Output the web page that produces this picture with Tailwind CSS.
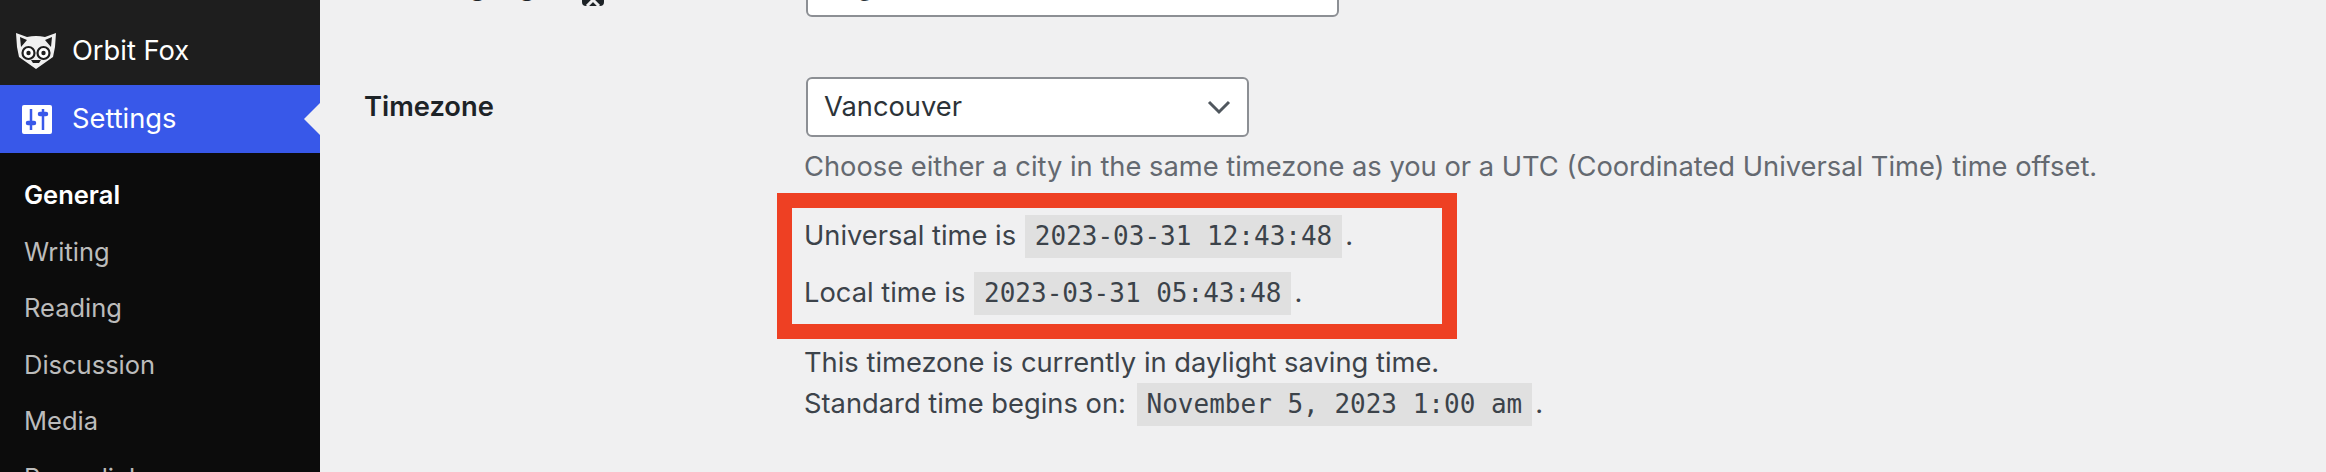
<!DOCTYPE html>
<html lang="en">
<head>
  <meta charset="UTF-8" />
  <title>General Settings</title>
  <script src="https://cdn.jsdelivr.net/npm/@tailwindcss/browser@4"></script>
</head>
<body class="bg-[#f0f0f1] h-screen overflow-hidden flex font-['Inter',sans-serif]">
  <!-- Admin sidebar -->
  <aside class="w-[320px] h-full shrink-0 bg-[#0c0c0c] flex flex-col overflow-hidden">
    <div class="h-[85px] shrink-0 bg-[#1e1e1e] flex items-start pl-4 pt-[33px] gap-[16px] text-white text-[27.3px]">
      <svg class="w-10 h-9" viewBox="0 0 40 36">
        <path d="M0 0L11 4Q20 2 29 4L40 0L39 14L37 24L20 36L3 24L1 14Z" fill="#f0f0f0"/>
        <path d="M4 4L11 7L5 14ZM36 4L29 7L35 14Z" fill="#1e1e1e"/>
        <g fill="#fff" stroke="#1e1e1e" stroke-width="2.2">
          <circle cx="12.5" cy="20" r="6"/>
          <circle cx="27.5" cy="20" r="6"/>
        </g>
        <circle cx="12.5" cy="20" r="2.2" fill="#1e1e1e"/>
        <circle cx="27.5" cy="20" r="2.2" fill="#1e1e1e"/>
        <path d="M15 27h10l-2 3h-6z" fill="#1e1e1e"/>
      </svg>
      <span class="leading-[36px]">Orbit Fox</span>
    </div>
    <div class="h-[68px] shrink-0 bg-[#3858e9] flex items-center pl-[22px] gap-[20px] text-white text-[27.3px] relative">
      <svg class="w-[30px] h-[29px]" viewBox="0 0 30 29">
        <rect width="30" height="29" rx="2" fill="#fff"/>
        <path d="M9 4v21M21 4v21" stroke="#3858e9" stroke-width="2.5"/>
        <path d="M6 18h6M18 9h6" stroke="#3858e9" stroke-width="4.5" stroke-linecap="round"/>
      </svg>
      <span>Settings</span>
      <div class="absolute right-0 top-[18px] w-0 h-0 border-y-[16px] border-y-transparent border-r-[16px] border-r-[#f0f0f1]"></div>
    </div>
    <nav class="pl-[24px] pt-[14px] flex flex-col text-[25.5px] leading-[56.5px] text-[#bcbcbc]">
      <a class="text-white font-semibold">General</a>
      <a>Writing</a>
      <a>Reading</a>
      <a>Discussion</a>
      <a>Media</a>
      <a>Permalinks</a>
    </nav>
  </aside>
  <!-- Settings form -->
  <main class="flex-1 flex flex-col pl-[44px] text-[27.3px] text-[#3c434a] overflow-hidden">
    <div class="h-0 flex">
      <div class="w-[442px] flex items-start gap-[30px] h-[30px] -mt-[29px] font-semibold text-[#1d2327] leading-[30px]">
        <span>Site Language</span>
        <svg class="w-[22px] h-[22px] mt-[13px]" viewBox="0 0 22 22">
          <rect width="22" height="22" rx="4" fill="#1d2327"/>
          <path d="M5 22l6-6 6 6" fill="none" stroke="#f0f0f1" stroke-width="3"/>
        </svg>
      </div>
      <div class="w-[533px] h-[50px] -mt-[33px] pl-[16px] bg-white border-2 border-[#8c8f94] rounded-md text-[#2c3338] leading-[34px]">English (United States)</div>
    </div>
    <div class="flex pt-[77px]">
      <div class="w-[440px] font-semibold text-[#1d2327] leading-[60px]">Timezone</div>
      <div class="flex flex-col">
        <div class="w-[443px] h-[60px] ml-[2px] bg-white border-2 border-[#8c8f94] rounded-md flex items-center justify-between pl-[16px] pr-[16px] text-[#2c3338]">
          <span>Vancouver</span>
          <svg class="w-6 h-6" viewBox="0 0 24 24" fill="none" stroke="#50575e" stroke-width="3"><path d="M2 7l10 10L22 7"/></svg>
        </div>
        <p class="mt-[12px] text-[#646970] whitespace-nowrap leading-[36px]">Choose either a city in the same timezone as you or a UTC (Coordinated Universal Time) time offset.</p>
        <div class="w-[680px] h-[146px] -ml-[27px] mt-[8px] border-[15px] border-[#ee4023] pl-[12px] pt-[6px] flex flex-col gap-[13px]">
          <p class="leading-[43px] whitespace-nowrap">Universal time is <code class="font-['DejaVu_Sans_Mono',monospace] text-[26px] bg-[#e0e0e0] inline-block px-[10px] ml-[1px] mr-[3px]">2023-03-31 12:43:48</code>.</p>
          <p class="leading-[43px] whitespace-nowrap">Local time is <code class="font-['DejaVu_Sans_Mono',monospace] text-[26px] bg-[#e0e0e0] inline-block px-[10px] ml-[1px] mr-[3px]">2023-03-31 05:43:48</code>.</p>
        </div>
        <p class="mt-[5px] whitespace-nowrap leading-[38px]">This timezone is currently in daylight saving time.</p>
        <p class="whitespace-nowrap leading-[43px]">Standard time begins on: <code class="font-['DejaVu_Sans_Mono',monospace] text-[26px] bg-[#e0e0e0] inline-block px-[10px] ml-[3px] mr-[3px]">November 5, 2023 1:00 am</code>.</p>
      </div>
    </div>
  </main>
</body>
</html>
